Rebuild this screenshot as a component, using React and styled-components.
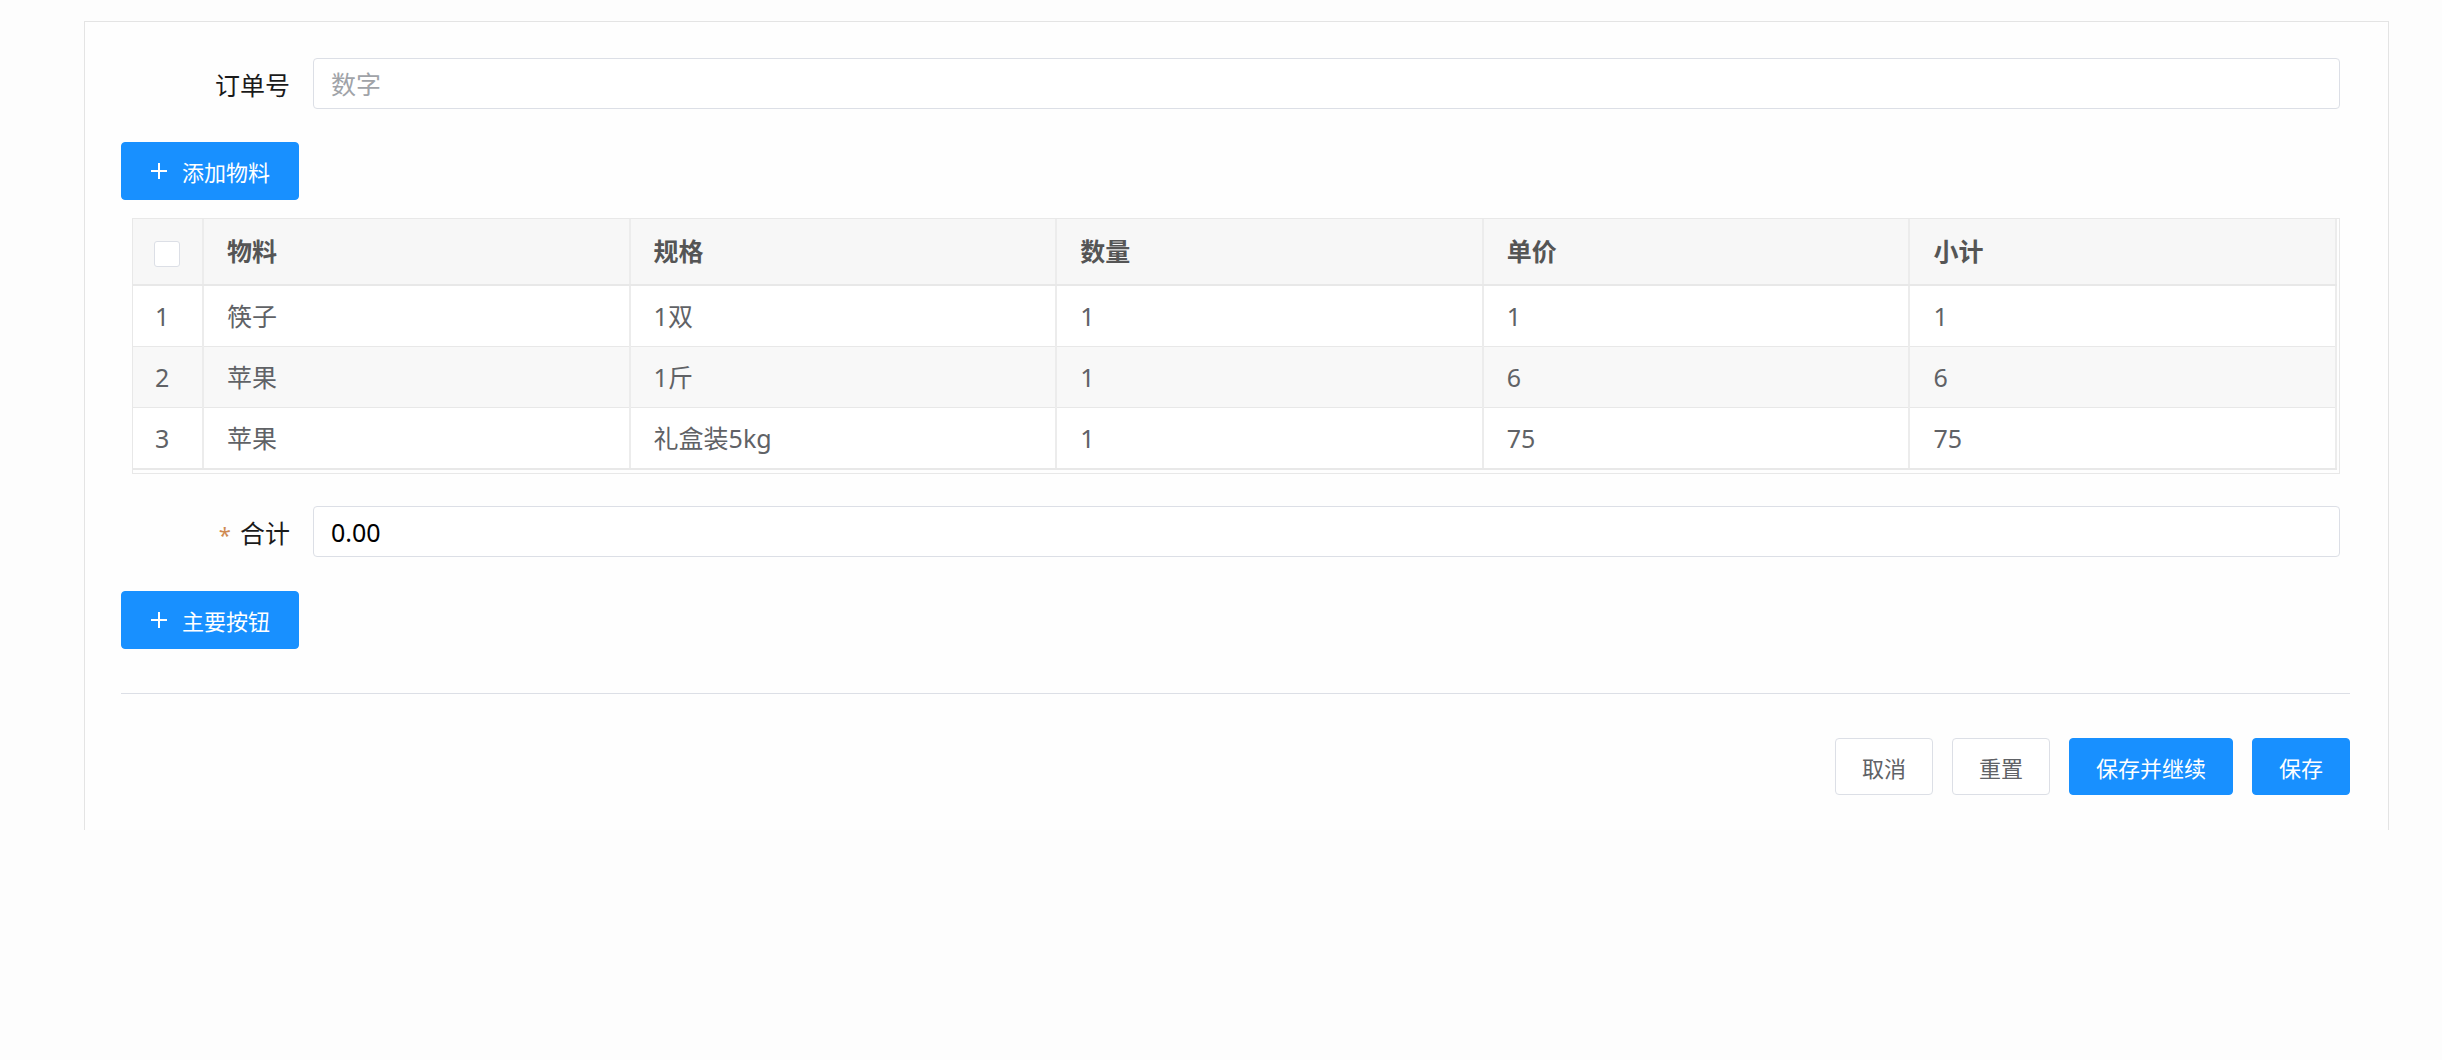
import React from "react";
import styled, { createGlobalStyle } from "styled-components";

const GlobalStyle = createGlobalStyle`
  html, body {
    margin: 0;
    padding: 0;
    background: #fdfdfd;
    font-family: "Noto Sans", "Noto Sans CJK SC", sans-serif;
  }
`;

const Page = styled.div`
  padding: 21px 53px 0 84px;
  min-height: 1060px;
  box-sizing: border-box;
`;

const Card = styled.div`
  box-sizing: border-box;
  height: 809px;
  border: 1px solid #e4e4e4;
  border-bottom: 0;
  background: #fefefe;
  padding: 36px 38px 0 36px;
`;

const FormRow = styled.div`
  display: flex;
  align-items: center;
  margin-right: 10px;
  margin-top: ${(props) => props.top || 0}px;
`;

const Label = styled.label`
  flex: 0 0 192px;
  box-sizing: border-box;
  padding-right: 23px;
  text-align: right;
  font-size: 25px;
  color: #1a1a1a;
`;

const Star = styled.span`
  color: #cf8a52;
  margin-right: 9px;
  font-size: 22px;
`;

const Input = styled.input`
  flex: 1;
  height: 51px;
  box-sizing: border-box;
  border: 1px solid #dcdfe6;
  border-radius: 4px;
  padding: 0 17px;
  font-family: inherit;
  font-size: 25px;
  color: #000;
  background: #fff;
  outline: none;
  &::placeholder {
    color: #a0a3a8;
  }
`;

const Button = styled.button`
  display: inline-flex;
  align-items: center;
  justify-content: center;
  gap: 14px;
  height: ${(props) => (props.tall ? 58 : 57)}px;
  box-sizing: border-box;
  padding: 0 ${(props) => props.px || 26}px;
  border-radius: 4px;
  font-family: inherit;
  font-size: 22px;
  cursor: pointer;
  border: 1px solid ${(props) => (props.primary ? "#1890ff" : "#dcdfe6")};
  background: ${(props) => (props.primary ? "#1890ff" : "#fff")};
  color: ${(props) => (props.primary ? "#fff" : "#606266")};
`;

const ActionRow = styled.div`
  margin-top: ${(props) => props.top}px;
  display: flex;
`;

const TableWrap = styled.div`
  margin: 18px 10px 0 11px;
  border: 1px solid #e8e8e8;
  padding: 0 2px 3px 0;
`;

const Table = styled.table`
  width: 100%;
  border-collapse: collapse;
  table-layout: fixed;
  font-size: 25px;
  color: #606266;
`;

const Th = styled.th`
  text-align: left;
  font-weight: bold;
  color: #555;
  background: #f7f7f7;
  padding: 14px 23px 15px;
  line-height: 36px;
  border-right: 2px solid #ececec;
  border-bottom: 2px solid #e8e8e8;
  width: ${(props) => (props.narrow ? "70px" : "auto")};
  box-sizing: border-box;
`;

const Tr = styled.tr`
  background: ${(props) => (props.striped ? "#f8f8f8" : "#fff")};
  &:last-child td {
    border-bottom-width: 2px;
  }
`;

const Td = styled.td`
  padding: 12px 23px;
  line-height: 36px;
  border-right: 2px solid #ececec;
  border-bottom: 1px solid #e8e8e8;
  white-space: nowrap;
  padding-left: ${(props) => (props.narrow ? 22 : 23)}px;
`;

const Checkbox = styled.span`
  display: inline-block;
  vertical-align: middle;
  width: 26px;
  height: 26px;
  box-sizing: border-box;
  border: 1px solid #dcdfe6;
  border-radius: 3px;
  background: #fff;
  margin-left: -2px;
`;

const Divider = styled.div`
  margin-top: 44px;
  height: 1px;
  background: #dcdfe6;
`;

const Footer = styled.div`
  margin-top: 44px;
  display: flex;
  justify-content: flex-end;
  gap: 19px;
`;

const PlusIcon = () => (
  <svg width="18" height="18" viewBox="0 0 18 18" fill="none">
    <path d="M9 1v16M1 9h16" stroke="#fff" strokeWidth="2" />
  </svg>
);

const rows = [
  { name: "筷子", spec: "1双", qty: 1, price: 1, sub: 1 },
  { name: "苹果", spec: "1斤", qty: 1, price: 6, sub: 6 },
  { name: "苹果", spec: "礼盒装5kg", qty: 1, price: 75, sub: 75 },
];

const App = () => {
  return (
    <Page>
      <GlobalStyle />
      <Card>
        <FormRow>
          <Label>订单号</Label>
          <Input placeholder="数字" />
        </FormRow>

        <ActionRow top={33}>
          <Button primary tall px={28}>
            <PlusIcon />
            添加物料
          </Button>
        </ActionRow>

        <TableWrap>
          <Table>
            <thead>
              <tr>
                <Th narrow>
                  <Checkbox />
                </Th>
                <Th>物料</Th>
                <Th>规格</Th>
                <Th>数量</Th>
                <Th>单价</Th>
                <Th>小计</Th>
              </tr>
            </thead>
            <tbody>
              {rows.map((r, i) => (
                <Tr key={i} striped={i === 1}>
                  <Td narrow>{i + 1}</Td>
                  <Td>{r.name}</Td>
                  <Td>{r.spec}</Td>
                  <Td>{r.qty}</Td>
                  <Td>{r.price}</Td>
                  <Td>{r.sub}</Td>
                </Tr>
              ))}
            </tbody>
          </Table>
        </TableWrap>

        <FormRow top={32}>
          <Label>
            <Star>*</Star>合计
          </Label>
          <Input defaultValue="0.00" />
        </FormRow>

        <ActionRow top={34}>
          <Button primary tall px={28}>
            <PlusIcon />
            主要按钮
          </Button>
        </ActionRow>

        <Divider />

        <Footer>
          <Button>取消</Button>
          <Button>重置</Button>
          <Button primary>保存并继续</Button>
          <Button primary>保存</Button>
        </Footer>
      </Card>
    </Page>
  );
};

export default App;
